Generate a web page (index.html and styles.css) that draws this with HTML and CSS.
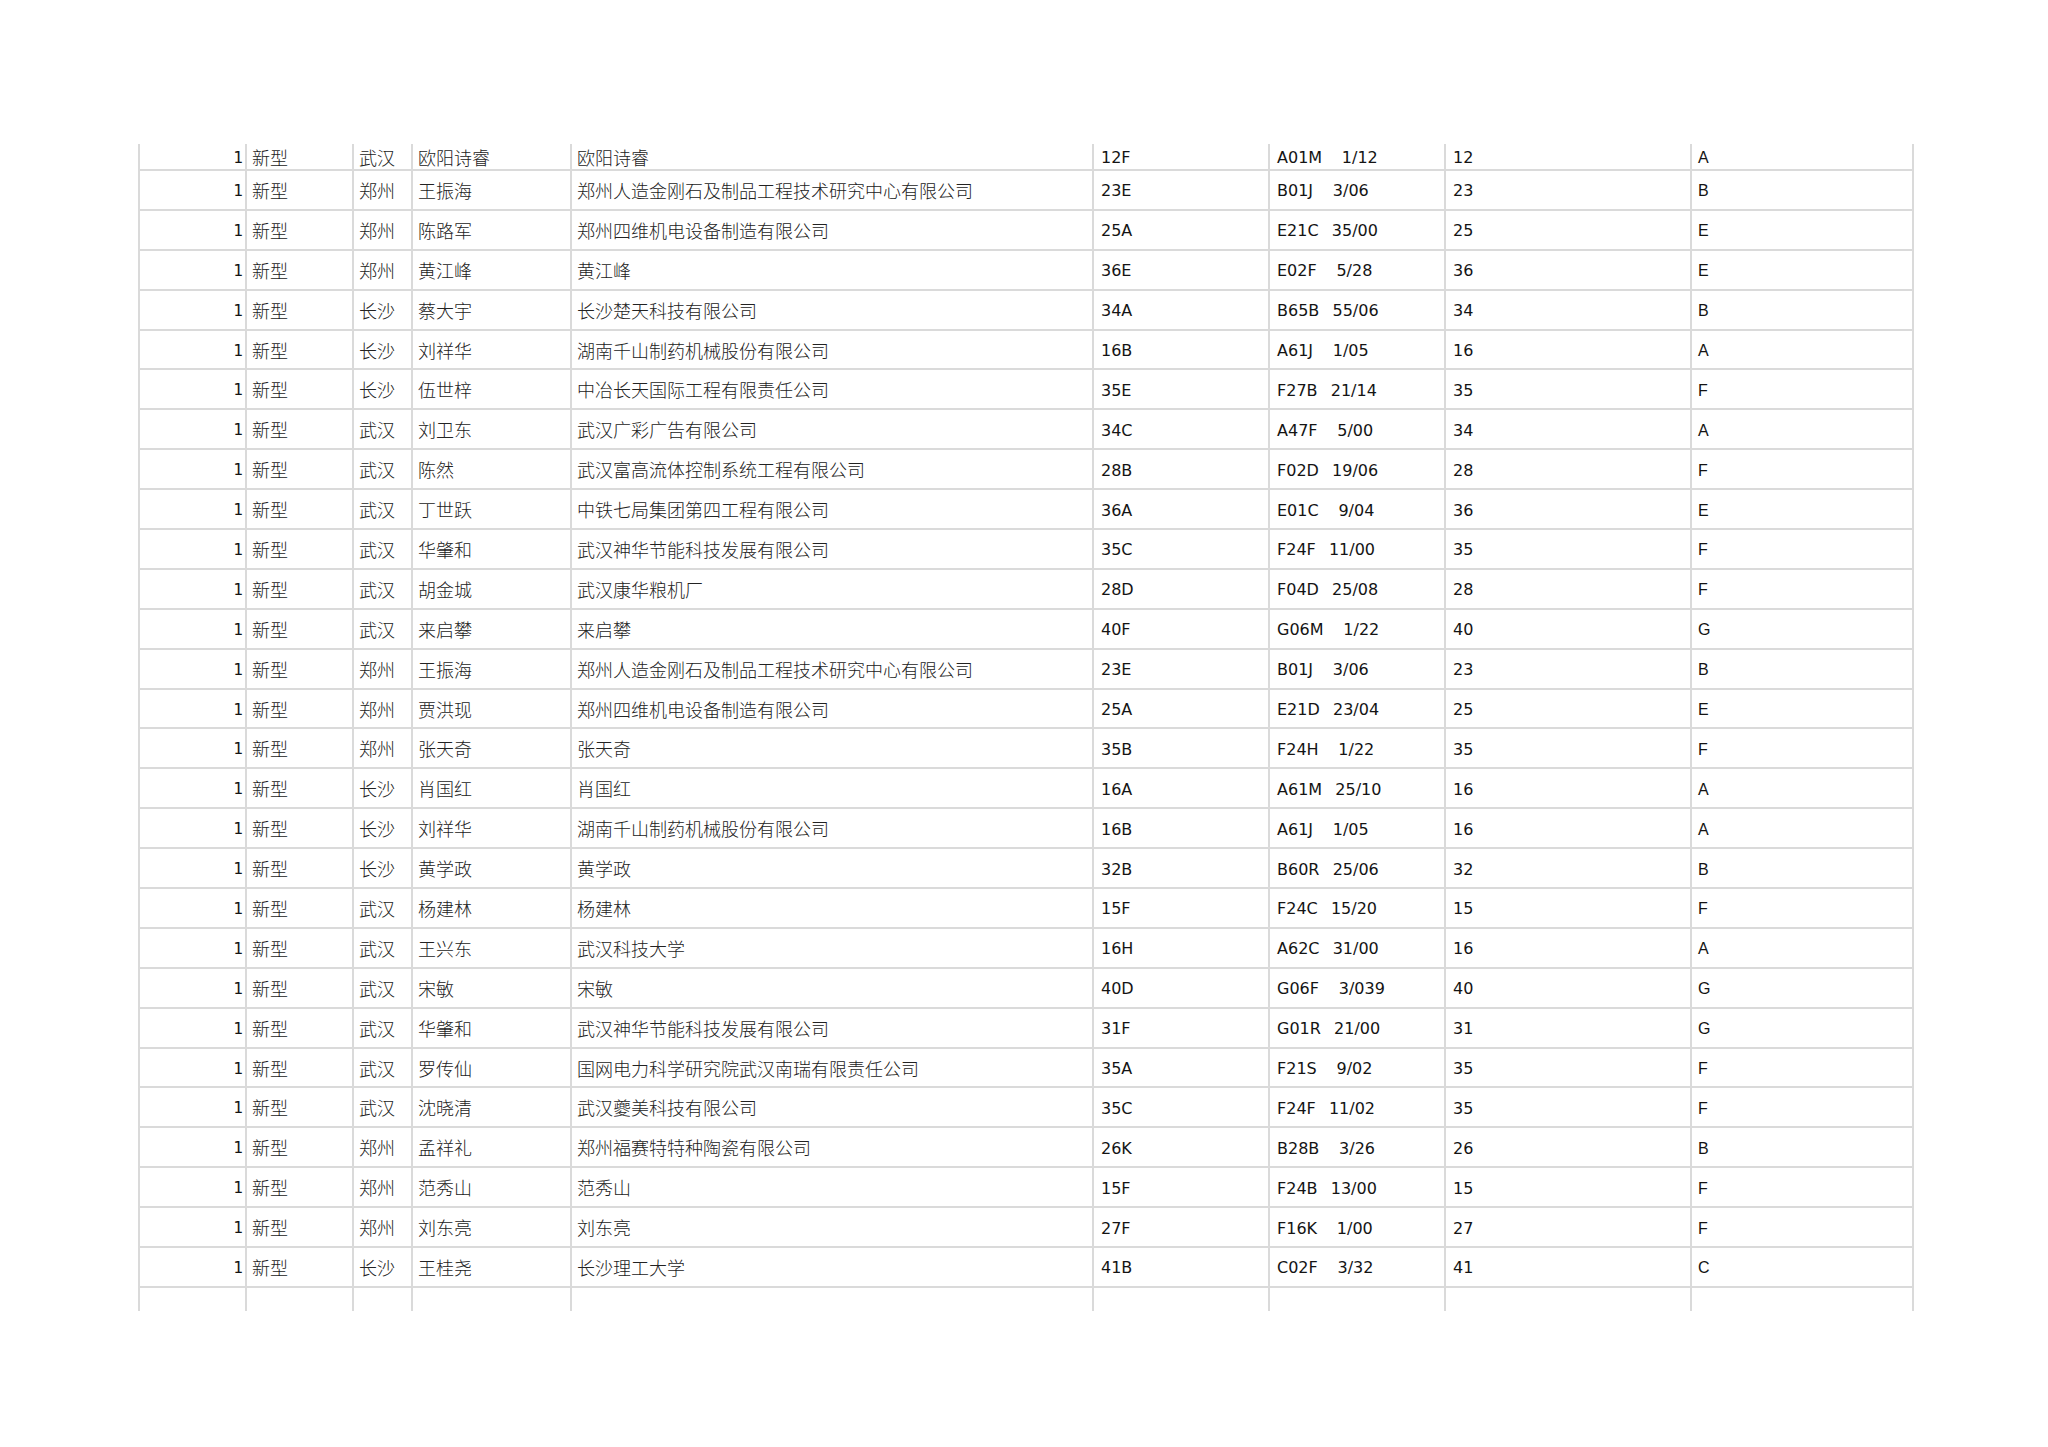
FILE: index.html
```html
<!DOCTYPE html>
<html lang="zh-CN">
<head>
<meta charset="utf-8">
<title>专利列表</title>
<link rel="stylesheet" href="styles.css">
</head>
<body>
<div class="page">
<table class="sheet">
<colgroup>
<col class="w-num"><col class="w-type"><col class="w-city"><col class="w-name"><col class="w-org"><col class="w-code"><col class="w-ipc"><col class="w-sec"><col class="w-cls">
</colgroup>
<tbody>
<tr class="row-first"><td class="num">1</td><td class="zh">新型</td><td class="zh">武汉</td><td class="zh">欧阳诗睿</td><td class="zh">欧阳诗睿</td><td class="lat">12F</td><td class="lat ipc">A01M   1/12</td><td class="lat">12</td><td class="cls">A</td></tr>
<tr><td class="num">1</td><td class="zh">新型</td><td class="zh">郑州</td><td class="zh">王振海</td><td class="zh">郑州人造金刚石及制品工程技术研究中心有限公司</td><td class="lat">23E</td><td class="lat ipc">B01J   3/06</td><td class="lat">23</td><td class="cls">B</td></tr>
<tr><td class="num">1</td><td class="zh">新型</td><td class="zh">郑州</td><td class="zh">陈路军</td><td class="zh">郑州四维机电设备制造有限公司</td><td class="lat">25A</td><td class="lat ipc">E21C  35/00</td><td class="lat">25</td><td class="cls">E</td></tr>
<tr><td class="num">1</td><td class="zh">新型</td><td class="zh">郑州</td><td class="zh">黄江峰</td><td class="zh">黄江峰</td><td class="lat">36E</td><td class="lat ipc">E02F   5/28</td><td class="lat">36</td><td class="cls">E</td></tr>
<tr><td class="num">1</td><td class="zh">新型</td><td class="zh">长沙</td><td class="zh">蔡大宇</td><td class="zh">长沙楚天科技有限公司</td><td class="lat">34A</td><td class="lat ipc">B65B  55/06</td><td class="lat">34</td><td class="cls">B</td></tr>
<tr><td class="num">1</td><td class="zh">新型</td><td class="zh">长沙</td><td class="zh">刘祥华</td><td class="zh">湖南千山制药机械股份有限公司</td><td class="lat">16B</td><td class="lat ipc">A61J   1/05</td><td class="lat">16</td><td class="cls">A</td></tr>
<tr><td class="num">1</td><td class="zh">新型</td><td class="zh">长沙</td><td class="zh">伍世梓</td><td class="zh">中冶长天国际工程有限责任公司</td><td class="lat">35E</td><td class="lat ipc">F27B  21/14</td><td class="lat">35</td><td class="cls">F</td></tr>
<tr><td class="num">1</td><td class="zh">新型</td><td class="zh">武汉</td><td class="zh">刘卫东</td><td class="zh">武汉广彩广告有限公司</td><td class="lat">34C</td><td class="lat ipc">A47F   5/00</td><td class="lat">34</td><td class="cls">A</td></tr>
<tr><td class="num">1</td><td class="zh">新型</td><td class="zh">武汉</td><td class="zh">陈然</td><td class="zh">武汉富高流体控制系统工程有限公司</td><td class="lat">28B</td><td class="lat ipc">F02D  19/06</td><td class="lat">28</td><td class="cls">F</td></tr>
<tr><td class="num">1</td><td class="zh">新型</td><td class="zh">武汉</td><td class="zh">丁世跃</td><td class="zh">中铁七局集团第四工程有限公司</td><td class="lat">36A</td><td class="lat ipc">E01C   9/04</td><td class="lat">36</td><td class="cls">E</td></tr>
<tr><td class="num">1</td><td class="zh">新型</td><td class="zh">武汉</td><td class="zh">华肇和</td><td class="zh">武汉神华节能科技发展有限公司</td><td class="lat">35C</td><td class="lat ipc">F24F  11/00</td><td class="lat">35</td><td class="cls">F</td></tr>
<tr><td class="num">1</td><td class="zh">新型</td><td class="zh">武汉</td><td class="zh">胡金城</td><td class="zh">武汉康华粮机厂</td><td class="lat">28D</td><td class="lat ipc">F04D  25/08</td><td class="lat">28</td><td class="cls">F</td></tr>
<tr><td class="num">1</td><td class="zh">新型</td><td class="zh">武汉</td><td class="zh">来启攀</td><td class="zh">来启攀</td><td class="lat">40F</td><td class="lat ipc">G06M   1/22</td><td class="lat">40</td><td class="cls">G</td></tr>
<tr><td class="num">1</td><td class="zh">新型</td><td class="zh">郑州</td><td class="zh">王振海</td><td class="zh">郑州人造金刚石及制品工程技术研究中心有限公司</td><td class="lat">23E</td><td class="lat ipc">B01J   3/06</td><td class="lat">23</td><td class="cls">B</td></tr>
<tr><td class="num">1</td><td class="zh">新型</td><td class="zh">郑州</td><td class="zh">贾洪现</td><td class="zh">郑州四维机电设备制造有限公司</td><td class="lat">25A</td><td class="lat ipc">E21D  23/04</td><td class="lat">25</td><td class="cls">E</td></tr>
<tr><td class="num">1</td><td class="zh">新型</td><td class="zh">郑州</td><td class="zh">张天奇</td><td class="zh">张天奇</td><td class="lat">35B</td><td class="lat ipc">F24H   1/22</td><td class="lat">35</td><td class="cls">F</td></tr>
<tr><td class="num">1</td><td class="zh">新型</td><td class="zh">长沙</td><td class="zh">肖国红</td><td class="zh">肖国红</td><td class="lat">16A</td><td class="lat ipc">A61M  25/10</td><td class="lat">16</td><td class="cls">A</td></tr>
<tr><td class="num">1</td><td class="zh">新型</td><td class="zh">长沙</td><td class="zh">刘祥华</td><td class="zh">湖南千山制药机械股份有限公司</td><td class="lat">16B</td><td class="lat ipc">A61J   1/05</td><td class="lat">16</td><td class="cls">A</td></tr>
<tr><td class="num">1</td><td class="zh">新型</td><td class="zh">长沙</td><td class="zh">黄学政</td><td class="zh">黄学政</td><td class="lat">32B</td><td class="lat ipc">B60R  25/06</td><td class="lat">32</td><td class="cls">B</td></tr>
<tr><td class="num">1</td><td class="zh">新型</td><td class="zh">武汉</td><td class="zh">杨建林</td><td class="zh">杨建林</td><td class="lat">15F</td><td class="lat ipc">F24C  15/20</td><td class="lat">15</td><td class="cls">F</td></tr>
<tr><td class="num">1</td><td class="zh">新型</td><td class="zh">武汉</td><td class="zh">王兴东</td><td class="zh">武汉科技大学</td><td class="lat">16H</td><td class="lat ipc">A62C  31/00</td><td class="lat">16</td><td class="cls">A</td></tr>
<tr><td class="num">1</td><td class="zh">新型</td><td class="zh">武汉</td><td class="zh">宋敏</td><td class="zh">宋敏</td><td class="lat">40D</td><td class="lat ipc">G06F   3/039</td><td class="lat">40</td><td class="cls">G</td></tr>
<tr><td class="num">1</td><td class="zh">新型</td><td class="zh">武汉</td><td class="zh">华肇和</td><td class="zh">武汉神华节能科技发展有限公司</td><td class="lat">31F</td><td class="lat ipc">G01R  21/00</td><td class="lat">31</td><td class="cls">G</td></tr>
<tr><td class="num">1</td><td class="zh">新型</td><td class="zh">武汉</td><td class="zh">罗传仙</td><td class="zh">国网电力科学研究院武汉南瑞有限责任公司</td><td class="lat">35A</td><td class="lat ipc">F21S   9/02</td><td class="lat">35</td><td class="cls">F</td></tr>
<tr><td class="num">1</td><td class="zh">新型</td><td class="zh">武汉</td><td class="zh">沈晓清</td><td class="zh">武汉夔美科技有限公司</td><td class="lat">35C</td><td class="lat ipc">F24F  11/02</td><td class="lat">35</td><td class="cls">F</td></tr>
<tr><td class="num">1</td><td class="zh">新型</td><td class="zh">郑州</td><td class="zh">孟祥礼</td><td class="zh">郑州福赛特特种陶瓷有限公司</td><td class="lat">26K</td><td class="lat ipc">B28B   3/26</td><td class="lat">26</td><td class="cls">B</td></tr>
<tr><td class="num">1</td><td class="zh">新型</td><td class="zh">郑州</td><td class="zh">范秀山</td><td class="zh">范秀山</td><td class="lat">15F</td><td class="lat ipc">F24B  13/00</td><td class="lat">15</td><td class="cls">F</td></tr>
<tr><td class="num">1</td><td class="zh">新型</td><td class="zh">郑州</td><td class="zh">刘东亮</td><td class="zh">刘东亮</td><td class="lat">27F</td><td class="lat ipc">F16K   1/00</td><td class="lat">27</td><td class="cls">F</td></tr>
<tr><td class="num">1</td><td class="zh">新型</td><td class="zh">长沙</td><td class="zh">王桂尧</td><td class="zh">长沙理工大学</td><td class="lat">41B</td><td class="lat ipc">C02F   3/32</td><td class="lat">41</td><td class="cls">C</td></tr>
<tr class="row-last"><td></td><td></td><td></td><td></td><td></td><td></td><td></td><td></td><td></td></tr>
</tbody>
</table>
</div>
</body>
</html>
```
FILE: styles.css
```css
html, body {
  margin: 0;
  padding: 0;
  background: #ffffff;
}

.page {
  padding: 144px 0 0 138px;
}

.sheet {
  border-collapse: separate;
  border-spacing: 0;
  table-layout: fixed;
  width: 1776px;
  border-left: 2px solid #dadada;
  color: #141414;
}

.w-num  { width: 107px; }
.w-type { width: 107px; }
.w-city { width: 59px; }
.w-name { width: 159px; }
.w-org  { width: 522px; }
.w-code { width: 176px; }
.w-ipc  { width: 176px; }
.w-sec  { width: 246px; }
.w-cls  { width: 222px; }

.sheet tr {
  height: 39.9px;
}

.sheet td {
  box-sizing: border-box;
  padding: 2px 0 0 6px;
  border-right: 2px solid #dadada;
  border-bottom: 2px solid #dadada;
  vertical-align: middle;
  white-space: nowrap;
  overflow: hidden;
  line-height: 20px;
}

.sheet .row-first {
  height: 27px;
}

.sheet .row-first td {
  padding-top: 0;
}

.sheet .row-last {
  height: 23px;
}

.sheet .row-last td {
  border-bottom: none;
}

.sheet td.num {
  text-align: right;
  padding: 2px 2px 0 0;
  font-family: "DejaVu Sans Mono", "Liberation Mono", monospace;
  font-size: 16px;
}

.sheet td.zh {
  padding-top: 0;
  padding-left: 5px;
  font-family: "Noto Sans CJK SC", "Noto Sans", sans-serif;
  font-size: 18px;
  font-weight: 300;
  color: #222222;
}

.sheet td.lat {
  padding-top: 3px;
  padding-left: 7px;
  font-family: "DejaVu Sans", "Noto Sans", sans-serif;
  font-size: 16px;
}

.sheet td.ipc {
  white-space: pre;
  word-spacing: 1.5px;
}

.sheet td.cls {
  padding-top: 3px;
  font-family: "Liberation Sans", Arial, sans-serif;
  font-size: 16px;
}

.sheet .row-first td.lat,
.sheet .row-first td.cls {
  padding-top: 2px;
}
```
